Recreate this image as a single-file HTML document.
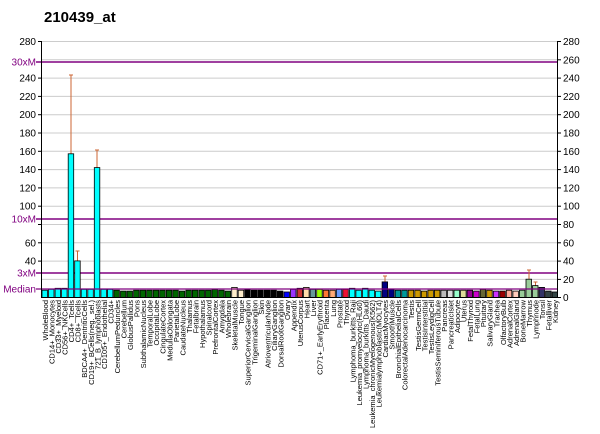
<!DOCTYPE html>
<html><head><meta charset="utf-8"><style>
html,body{margin:0;padding:0;background:#fff;}
svg{display:block;font-family:"Liberation Sans",Arial,sans-serif;}
.l{font-size:7.5px;fill:#000;}
.a{font-size:10px;fill:#000;}
.m{font-size:10px;fill:#800080;}
</style></head><body>
<svg width="600" height="434" viewBox="0 0 600 434" xmlns="http://www.w3.org/2000/svg">
<text x="44" y="22" font-size="15" font-weight="bold">210439_at</text>
<g stroke="#cccccc" stroke-width="1">
<line x1="41" x2="558" y1="41.5" y2="41.5"/><line x1="41" x2="558" y1="59.8" y2="59.8"/><line x1="41" x2="558" y1="78.1" y2="78.1"/><line x1="41" x2="558" y1="96.4" y2="96.4"/><line x1="41" x2="558" y1="114.7" y2="114.7"/><line x1="41" x2="558" y1="133" y2="133"/><line x1="41" x2="558" y1="151.3" y2="151.3"/><line x1="41" x2="558" y1="169.6" y2="169.6"/><line x1="41" x2="558" y1="187.9" y2="187.9"/><line x1="41" x2="558" y1="206.2" y2="206.2"/><line x1="41" x2="558" y1="224.5" y2="224.5"/><line x1="41" x2="558" y1="242.8" y2="242.8"/><line x1="41" x2="558" y1="261.1" y2="261.1"/><line x1="41" x2="558" y1="279.4" y2="279.4"/>
</g>
<g stroke="#000" stroke-width="1">
<line x1="38" x2="41" y1="41.5" y2="41.5"/><line x1="38" x2="41" y1="78.1" y2="78.1"/><line x1="38" x2="41" y1="96.4" y2="96.4"/><line x1="38" x2="41" y1="114.7" y2="114.7"/><line x1="38" x2="41" y1="133" y2="133"/><line x1="38" x2="41" y1="151.3" y2="151.3"/><line x1="38" x2="41" y1="169.6" y2="169.6"/><line x1="38" x2="41" y1="187.9" y2="187.9"/><line x1="38" x2="41" y1="206.2" y2="206.2"/><line x1="38" x2="41" y1="224.5" y2="224.5"/><line x1="38" x2="41" y1="242.8" y2="242.8"/><line x1="38" x2="41" y1="261.1" y2="261.1"/>
<line x1="558" x2="561" y1="41.5" y2="41.5"/><line x1="558" x2="561" y1="59.8" y2="59.8"/><line x1="558" x2="561" y1="78.1" y2="78.1"/><line x1="558" x2="561" y1="96.4" y2="96.4"/><line x1="558" x2="561" y1="114.7" y2="114.7"/><line x1="558" x2="561" y1="133" y2="133"/><line x1="558" x2="561" y1="151.3" y2="151.3"/><line x1="558" x2="561" y1="169.6" y2="169.6"/><line x1="558" x2="561" y1="187.9" y2="187.9"/><line x1="558" x2="561" y1="206.2" y2="206.2"/><line x1="558" x2="561" y1="224.5" y2="224.5"/><line x1="558" x2="561" y1="242.8" y2="242.8"/><line x1="558" x2="561" y1="261.1" y2="261.1"/><line x1="558" x2="561" y1="279.4" y2="279.4"/><line x1="558" x2="561" y1="297.5" y2="297.5"/>
</g>
<g stroke="#800080" stroke-width="1.5">
<line x1="36" x2="558" y1="62" y2="62"/><line x1="36" x2="558" y1="219" y2="219"/><line x1="36" x2="558" y1="273" y2="273"/>
</g>
<text class="m" x="36" y="65.5" text-anchor="end">30xM</text>
<text class="m" x="36" y="222.5" text-anchor="end">10xM</text>
<text class="m" x="36" y="276.5" text-anchor="end">3xM</text>
<text class="m" x="36" y="292.5" text-anchor="end">Median</text>
<g class="a" text-anchor="end">
<text x="36" y="45">280</text><text x="36" y="81.6">240</text><text x="36" y="99.9">220</text><text x="36" y="118.2">200</text><text x="36" y="136.5">180</text><text x="36" y="154.8">160</text><text x="36" y="173.1">140</text><text x="36" y="191.4">120</text><text x="36" y="209.7">100</text><text x="36" y="246.3">60</text><text x="36" y="264.6">40</text>
</g>
<g class="a">
<text x="563" y="45">280</text><text x="563" y="63.3">260</text><text x="563" y="81.6">240</text><text x="563" y="99.9">220</text><text x="563" y="118.2">200</text><text x="563" y="136.5">180</text><text x="563" y="154.8">160</text><text x="563" y="173.1">140</text><text x="563" y="191.4">120</text><text x="563" y="209.7">100</text><text x="563" y="228">80</text><text x="563" y="246.3">60</text><text x="563" y="264.6">40</text><text x="563" y="282.9">20</text><text x="563" y="301">0</text>
</g>
<g stroke="#CC6633" stroke-width="1">
<line x1="71" x2="71" y1="75" y2="154"/><line x1="69" x2="73" y1="75" y2="75"/>
<line x1="77.5" x2="77.5" y1="251" y2="261"/><line x1="75.5" x2="79.5" y1="251" y2="251"/>
<line x1="97" x2="97" y1="150" y2="168"/><line x1="95" x2="99" y1="150" y2="150"/>
<line x1="385" x2="385" y1="276" y2="282"/><line x1="383" x2="387" y1="276" y2="276"/>
<line x1="529" x2="529" y1="270" y2="279"/><line x1="527" x2="531" y1="270" y2="270"/>
<line x1="535.5" x2="535.5" y1="282" y2="286"/><line x1="533.5" x2="537.5" y1="282" y2="282"/>
</g>
<g stroke="#000" stroke-width="0.8">
<rect x="42" y="290.2" width="5.5" height="7.3" fill="#00FFFF"/>
<rect x="48.5" y="289.3" width="5.5" height="8.2" fill="#00FFFF"/>
<rect x="55.1" y="288.3" width="5.5" height="9.2" fill="#00FFFF"/>
<rect x="61.6" y="288.3" width="5.5" height="9.2" fill="#00FFFF"/>
<rect x="68.2" y="153.8" width="5.5" height="143.7" fill="#00FFFF"/>
<rect x="74.7" y="260.9" width="5.5" height="36.6" fill="#00FFFF"/>
<rect x="81.2" y="289.3" width="5.5" height="8.2" fill="#00FFFF"/>
<rect x="87.8" y="289.3" width="5.5" height="8.2" fill="#00FFFF"/>
<rect x="94.3" y="167.6" width="5.5" height="129.9" fill="#00FFFF"/>
<rect x="100.9" y="289.3" width="5.5" height="8.2" fill="#00FFFF"/>
<rect x="107.4" y="289.3" width="5.5" height="8.2" fill="#00FFFF"/>
<rect x="113.9" y="290.2" width="5.5" height="7.3" fill="#006600"/>
<rect x="120.5" y="291.1" width="5.5" height="6.4" fill="#006600"/>
<rect x="127" y="291.1" width="5.5" height="6.4" fill="#006600"/>
<rect x="133.6" y="290.2" width="5.5" height="7.3" fill="#006600"/>
<rect x="140.1" y="290.2" width="5.5" height="7.3" fill="#006600"/>
<rect x="146.6" y="290.2" width="5.5" height="7.3" fill="#006600"/>
<rect x="153.2" y="290.2" width="5.5" height="7.3" fill="#006600"/>
<rect x="159.7" y="290.2" width="5.5" height="7.3" fill="#006600"/>
<rect x="166.3" y="290.2" width="5.5" height="7.3" fill="#006600"/>
<rect x="172.8" y="290.2" width="5.5" height="7.3" fill="#006600"/>
<rect x="179.3" y="291.1" width="5.5" height="6.4" fill="#006600"/>
<rect x="185.9" y="290.2" width="5.5" height="7.3" fill="#006600"/>
<rect x="192.4" y="290.2" width="5.5" height="7.3" fill="#006600"/>
<rect x="199" y="290.2" width="5.5" height="7.3" fill="#006600"/>
<rect x="205.5" y="290.2" width="5.5" height="7.3" fill="#006600"/>
<rect x="212" y="289.3" width="5.5" height="8.2" fill="#006600"/>
<rect x="218.6" y="290.2" width="5.5" height="7.3" fill="#006600"/>
<rect x="225.1" y="291.1" width="5.5" height="6.4" fill="#006600"/>
<rect x="231.7" y="287.4" width="5.5" height="10.1" fill="#FFEECC"/>
<rect x="238.2" y="290.2" width="5.5" height="7.3" fill="#FFEECC"/>
<rect x="244.7" y="289.3" width="5.5" height="8.2" fill="#000"/>
<rect x="251.3" y="290.2" width="5.5" height="7.3" fill="#000"/>
<rect x="257.8" y="290.2" width="5.5" height="7.3" fill="#000"/>
<rect x="264.4" y="290.2" width="5.5" height="7.3" fill="#000"/>
<rect x="270.9" y="290.2" width="5.5" height="7.3" fill="#000"/>
<rect x="277.4" y="291.1" width="5.5" height="6.4" fill="#000"/>
<rect x="284" y="292" width="5.5" height="5.5" fill="#0000FF"/>
<rect x="290.5" y="289.3" width="5.5" height="8.2" fill="#9933FF"/>
<rect x="297.1" y="288.3" width="5.5" height="9.2" fill="#CC3333"/>
<rect x="303.6" y="287.4" width="5.5" height="10.1" fill="#FFDDAA"/>
<rect x="310.1" y="289.3" width="5.5" height="8.2" fill="#669999"/>
<rect x="316.7" y="289.3" width="5.5" height="8.2" fill="#99FF00"/>
<rect x="323.2" y="290.2" width="5.5" height="7.3" fill="#FF7733"/>
<rect x="329.8" y="290.2" width="5.5" height="7.3" fill="#FFAA77"/>
<rect x="336.3" y="289.3" width="5.5" height="8.2" fill="#6699FF"/>
<rect x="342.8" y="289.3" width="5.5" height="8.2" fill="#EE1133"/>
<rect x="349.4" y="288.3" width="5.5" height="9.2" fill="#00FFFF"/>
<rect x="355.9" y="290.2" width="5.5" height="7.3" fill="#00FFFF"/>
<rect x="362.5" y="288.3" width="5.5" height="9.2" fill="#00FFFF"/>
<rect x="369" y="290.2" width="5.5" height="7.3" fill="#00FFFF"/>
<rect x="375.5" y="291.1" width="5.5" height="6.4" fill="#00FFFF"/>
<rect x="382.1" y="281.9" width="5.5" height="15.6" fill="#000080"/>
<rect x="388.6" y="289.3" width="5.5" height="8.2" fill="#000080"/>
<rect x="395.2" y="290.2" width="5.5" height="7.3" fill="#009999"/>
<rect x="401.7" y="290.2" width="5.5" height="7.3" fill="#009999"/>
<rect x="408.2" y="290.2" width="5.5" height="7.3" fill="#CC9900"/>
<rect x="414.8" y="290.2" width="5.5" height="7.3" fill="#CC9900"/>
<rect x="421.3" y="291.1" width="5.5" height="6.4" fill="#CC9900"/>
<rect x="427.9" y="290.2" width="5.5" height="7.3" fill="#CC9900"/>
<rect x="434.4" y="290.2" width="5.5" height="7.3" fill="#CC9900"/>
<rect x="440.9" y="290.2" width="5.5" height="7.3" fill="#BBBBBB"/>
<rect x="447.5" y="290.2" width="5.5" height="7.3" fill="#DDDDDD"/>
<rect x="454" y="290.2" width="5.5" height="7.3" fill="#99FFCC"/>
<rect x="460.6" y="290.2" width="5.5" height="7.3" fill="#DDDD99"/>
<rect x="467.1" y="290.2" width="5.5" height="7.3" fill="#990099"/>
<rect x="473.6" y="291.1" width="5.5" height="6.4" fill="#CC00CC"/>
<rect x="480.2" y="289.3" width="5.5" height="8.2" fill="#666633"/>
<rect x="486.7" y="290.2" width="5.5" height="7.3" fill="#CC9900"/>
<rect x="493.3" y="291.1" width="5.5" height="6.4" fill="#CC33FF"/>
<rect x="499.8" y="291.1" width="5.5" height="6.4" fill="#990000"/>
<rect x="506.3" y="290.2" width="5.5" height="7.3" fill="#FFAA99"/>
<rect x="512.9" y="291.1" width="5.5" height="6.4" fill="#FFCCBB"/>
<rect x="519.4" y="290.2" width="5.5" height="7.3" fill="#99CC99"/>
<rect x="526" y="279.2" width="5.5" height="18.3" fill="#99CC99"/>
<rect x="532.5" y="285.6" width="5.5" height="11.9" fill="#99CC99"/>
<rect x="539" y="287.4" width="5.5" height="10.1" fill="#333366"/>
<rect x="545.6" y="291.1" width="5.5" height="6.4" fill="#334444"/>
<rect x="552.1" y="292" width="5.5" height="5.5" fill="#334444"/>
</g>
<line x1="36" x2="558" y1="289" y2="289" stroke="#800080" stroke-width="1.2"/>
<g stroke="#000" stroke-width="1">
<line x1="41.5" x2="41.5" y1="41" y2="298"/>
<line x1="557.5" x2="557.5" y1="41" y2="298"/>
<line x1="41" x2="558" y1="297.5" y2="297.5"/>
</g>
<g class="l" text-anchor="end">
<text transform="translate(48,300) rotate(-90)">WholeBlood</text>
<text transform="translate(54.5,300) rotate(-90)">CD14+_Monocytes</text>
<text transform="translate(61.1,300) rotate(-90)">CD33+_Myeloid</text>
<text transform="translate(67.6,300) rotate(-90)">CD56+_NKCells</text>
<text transform="translate(74.2,300) rotate(-90)">CD4+_Tcells</text>
<text transform="translate(80.7,300) rotate(-90)">CD8+_Tcells</text>
<text transform="translate(87.2,300) rotate(-90)">BDCA4+_DentriticCells</text>
<text transform="translate(93.8,300) rotate(-90)">CD19+_BCells(neg._sel.)</text>
<text transform="translate(100.3,300) rotate(-90)">721_B_lymphoblasts</text>
<text transform="translate(106.9,300) rotate(-90)">CD105+_Endothelial</text>
<text transform="translate(113.4,300) rotate(-90)">CD34+</text>
<text transform="translate(119.9,300) rotate(-90)">CerebellumPeduncles</text>
<text transform="translate(126.5,300) rotate(-90)">Cerebellum</text>
<text transform="translate(133,300) rotate(-90)">GlobusPallidus</text>
<text transform="translate(139.6,300) rotate(-90)">Pons</text>
<text transform="translate(146.1,300) rotate(-90)">SubthalamicNucleus</text>
<text transform="translate(152.6,300) rotate(-90)">TemporalLobe</text>
<text transform="translate(159.2,300) rotate(-90)">OccipitalLobe</text>
<text transform="translate(165.7,300) rotate(-90)">CingulateCortex</text>
<text transform="translate(172.3,300) rotate(-90)">MedullaOblongata</text>
<text transform="translate(178.8,300) rotate(-90)">ParietalLobe</text>
<text transform="translate(185.3,300) rotate(-90)">CaudateNucleus</text>
<text transform="translate(191.9,300) rotate(-90)">Thalamus</text>
<text transform="translate(198.4,300) rotate(-90)">Fetalbrain</text>
<text transform="translate(205,300) rotate(-90)">Hypothalamus</text>
<text transform="translate(211.5,300) rotate(-90)">Spinalcord</text>
<text transform="translate(218,300) rotate(-90)">PrefrontalCortex</text>
<text transform="translate(224.6,300) rotate(-90)">Amygdala</text>
<text transform="translate(231.1,300) rotate(-90)">Wholebrain</text>
<text transform="translate(237.7,300) rotate(-90)">SkeletalMuscle</text>
<text transform="translate(244.2,300) rotate(-90)">Tongue</text>
<text transform="translate(250.7,300) rotate(-90)">SuperiorCervicalGanglion</text>
<text transform="translate(257.3,300) rotate(-90)">TrigeminalGanglion</text>
<text transform="translate(263.8,300) rotate(-90)">Skin</text>
<text transform="translate(270.4,300) rotate(-90)">AtrioventricularNode</text>
<text transform="translate(276.9,300) rotate(-90)">CiliaryGanglion</text>
<text transform="translate(283.4,300) rotate(-90)">DorsalRootGanglion</text>
<text transform="translate(290,300) rotate(-90)">Ovary</text>
<text transform="translate(296.5,300) rotate(-90)">Appendix</text>
<text transform="translate(303.1,300) rotate(-90)">UterusCorpus</text>
<text transform="translate(309.6,300) rotate(-90)">Heart</text>
<text transform="translate(316.1,300) rotate(-90)">Liver</text>
<text transform="translate(322.7,300) rotate(-90)">CD71+_EarlyErythroid</text>
<text transform="translate(329.2,300) rotate(-90)">Placenta</text>
<text transform="translate(335.8,300) rotate(-90)">Lung</text>
<text transform="translate(342.3,300) rotate(-90)">Prostate</text>
<text transform="translate(348.8,300) rotate(-90)">Thyroid</text>
<text transform="translate(355.4,300) rotate(-90)">Lymphoma_burkitts_Raji</text>
<text transform="translate(361.9,300) rotate(-90)">Leukemia_promyelocytic(HL60)</text>
<text transform="translate(368.5,300) rotate(-90)">Lymphoma_burkitts_Daudi</text>
<text transform="translate(375,300) rotate(-90)">Leukemia_chronicMyelogenous(K562)</text>
<text transform="translate(381.5,300) rotate(-90)">Leukemialymphoblastic(MOLT4)</text>
<text transform="translate(388.1,300) rotate(-90)">CardiacMyocytes</text>
<text transform="translate(394.6,300) rotate(-90)">SmoothMuscle</text>
<text transform="translate(401.2,300) rotate(-90)">BronchialEpithelialCells</text>
<text transform="translate(407.7,300) rotate(-90)">ColorectalAdenocarcinoma</text>
<text transform="translate(414.2,300) rotate(-90)">Testis</text>
<text transform="translate(420.8,300) rotate(-90)">TestisGermCell</text>
<text transform="translate(427.3,300) rotate(-90)">TestisInterstitial</text>
<text transform="translate(433.9,300) rotate(-90)">TestisLeydigCell</text>
<text transform="translate(440.4,300) rotate(-90)">TestisSeminiferousTubule</text>
<text transform="translate(446.9,300) rotate(-90)">Pancreas</text>
<text transform="translate(453.5,300) rotate(-90)">PancreaticIslet</text>
<text transform="translate(460,300) rotate(-90)">Adipocyte</text>
<text transform="translate(466.6,300) rotate(-90)">Uterus</text>
<text transform="translate(473.1,300) rotate(-90)">FetalThyroid</text>
<text transform="translate(479.6,300) rotate(-90)">FetalLung</text>
<text transform="translate(486.2,300) rotate(-90)">Pituitary</text>
<text transform="translate(492.7,300) rotate(-90)">SalivaryGland</text>
<text transform="translate(499.3,300) rotate(-90)">Trachea</text>
<text transform="translate(505.8,300) rotate(-90)">OlfactoryBulb</text>
<text transform="translate(512.3,300) rotate(-90)">AdrenalCortex</text>
<text transform="translate(518.9,300) rotate(-90)">AdrenalGland</text>
<text transform="translate(525.4,300) rotate(-90)">BoneMarrow</text>
<text transform="translate(532,300) rotate(-90)">Thymus</text>
<text transform="translate(538.5,300) rotate(-90)">Lymphnode</text>
<text transform="translate(545,300) rotate(-90)">Tonsil</text>
<text transform="translate(551.6,300) rotate(-90)">Fetalliver</text>
<text transform="translate(558.1,300) rotate(-90)">Kidney</text>
</g>
</svg>
</body></html>
